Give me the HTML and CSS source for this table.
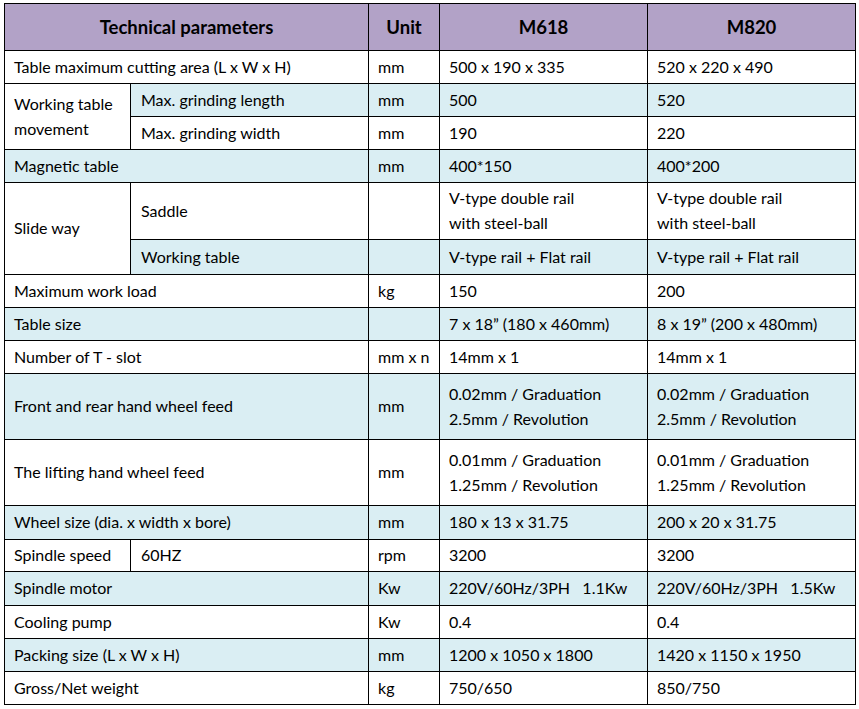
FILE: index.html
```html
<!DOCTYPE html>
<html>
<head>
<meta charset="utf-8">
<link rel="stylesheet" href="styles.css">
</head>
<body>
<table class="spec">
  <colgroup>
    <col class="c1"><col class="c2"><col class="c3"><col class="c4"><col class="c5">
  </colgroup>
  <thead>
    <tr class="hd"><th colspan="2">Technical parameters</th><th>Unit</th><th>M618</th><th>M820</th></tr>
  </thead>
  <tbody>
    <tr class="h33"><td colspan="2">Table maximum cutting area (L x W x H)</td><td>mm</td><td>500 x 190 x 335</td><td>520 x 220 x 490</td></tr>
    <tr class="h33 blue"><td rowspan="2" class="wt">Working table<br>movement</td><td class="sub">Max. grinding length</td><td>mm</td><td>500</td><td>520</td></tr>
    <tr class="h33"><td class="sub">Max. grinding width</td><td>mm</td><td>190</td><td>220</td></tr>
    <tr class="h33 blue"><td colspan="2">Magnetic table</td><td>mm</td><td>400*150</td><td>400*200</td></tr>
    <tr class="h57"><td rowspan="2" class="wt">Slide way</td><td class="sub">Saddle</td><td></td><td>V-type double rail<br>with steel-ball</td><td>V-type double rail<br>with steel-ball</td></tr>
    <tr class="h35 blue"><td class="sub">Working table</td><td></td><td>V-type rail + Flat rail</td><td>V-type rail + Flat rail</td></tr>
    <tr class="h33"><td colspan="2">Maximum work load</td><td>kg</td><td>150</td><td>200</td></tr>
    <tr class="h33 blue"><td colspan="2">Table size</td><td></td><td>7 x 18” (180 x 460mm)</td><td>8 x 19” (200 x 480mm)</td></tr>
    <tr class="h33"><td colspan="2">Number of T - slot</td><td>mm x n</td><td>14mm x 1</td><td>14mm x 1</td></tr>
    <tr class="h66 blue"><td colspan="2">Front and rear hand wheel feed</td><td>mm</td><td>0.02mm / Graduation<br>2.5mm / Revolution</td><td>0.02mm / Graduation<br>2.5mm / Revolution</td></tr>
    <tr class="h66"><td colspan="2">The lifting hand wheel feed</td><td>mm</td><td>0.01mm / Graduation<br>1.25mm / Revolution</td><td>0.01mm / Graduation<br>1.25mm / Revolution</td></tr>
    <tr class="h34 blue"><td colspan="2">Wheel size (dia. x width x bore)</td><td>mm</td><td>180 x 13 x 31.75</td><td>200 x 20 x 31.75</td></tr>
    <tr class="h32"><td>Spindle speed</td><td class="sub">60HZ</td><td>rpm</td><td>3200</td><td>3200</td></tr>
    <tr class="h34 blue"><td colspan="2">Spindle motor</td><td>Kw</td><td>220V/60Hz/3PH&nbsp;&nbsp;&nbsp;1.1Kw</td><td>220V/60Hz/3PH&nbsp;&nbsp;&nbsp;1.5Kw</td></tr>
    <tr class="h33"><td colspan="2">Cooling pump</td><td>Kw</td><td>0.4</td><td>0.4</td></tr>
    <tr class="h33 blue"><td colspan="2">Packing size (L x W x H)</td><td>mm</td><td>1200 x 1050 x 1800</td><td>1420 x 1150 x 1950</td></tr>
    <tr class="h33"><td colspan="2">Gross/Net weight</td><td>kg</td><td>750/650</td><td>850/750</td></tr>
  </tbody>
</table>
</body>
</html>
```
FILE: styles.css
```css
html, body {
  margin: 0;
  padding: 0;
  background: #ffffff;
}
body {
  padding: 3px 0 0 4px;
  font-family: Lato, "Open Sans", sans-serif;
  color: #000000;
}
.spec {
  border-collapse: separate;
  border-spacing: 0;
  table-layout: fixed;
  width: 852px;
  border-top: 1px solid #000;
  border-left: 1px solid #000;
  font-size: 16px;
}
.c1 { width: 126px; }
.c2 { width: 238px; }
.c3 { width: 71px; }
.c4 { width: 208px; }
.c5 { width: 208px; }
.spec th, .spec td {
  box-sizing: border-box;
  border-right: 1px solid #000;
  border-bottom: 1px solid #000;
  padding: 0 6px 2px 9px;
  text-align: left;
  vertical-align: middle;
  line-height: 25px;
  white-space: nowrap;
  overflow: hidden;
}
.spec .sub { padding-left: 10px; }
.hd { height: 47px; background: #b2a2c7; }
.spec th {
  text-align: center;
  font-weight: 700;
  font-size: 18.5px;
  padding: 0;
}
.blue { background: #daeef3; }
.spec .wt { background: #ffffff; }
.h32 { height: 32px; }
.h33 { height: 33px; }
.h34 { height: 34px; }
.h35 { height: 35px; }
.h57 { height: 57px; }
.h66 { height: 66px; }
```
